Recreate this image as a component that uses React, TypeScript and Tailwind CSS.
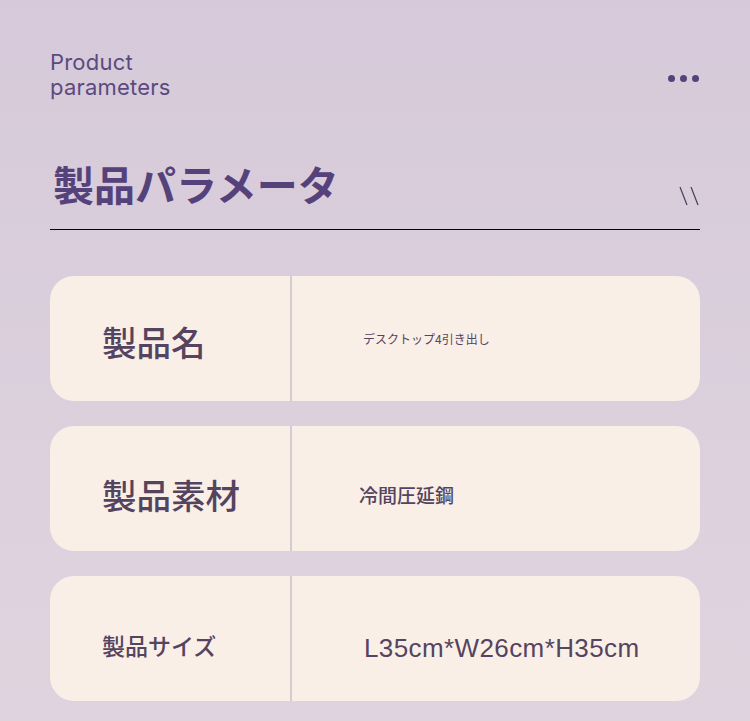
const params = [
  {
    label: '製品名',
    labelClass: 'text-[34.5px] font-medium pt-[5px]',
    value: 'デスクトップ4引き出し',
    valueClass: 'text-[12px] pl-[71px] pt-[1px]',
  },
  {
    label: '製品素材',
    labelClass: 'text-[34.5px] font-medium pt-[12px]',
    value: '冷間圧延鋼',
    valueClass: 'text-[19px] font-medium pl-[67px] pt-[11px]',
  },
  {
    label: '製品サイズ',
    labelClass: 'text-[23px] font-medium pt-[13px]',
    value: 'L35cm*W26cm*H35cm',
    valueClass:
      "text-[26px] tracking-[0.4px] pl-[72px] pt-[19px] font-['Liberation_Sans','Noto_Sans_CJK_JP',sans-serif]",
  },
];

function Dots() {
  return (
    <div className="mt-[25px] flex gap-[5px] pr-[1px]">
      <span className="h-[7px] w-[7px] rounded-full bg-[#54427a]" />
      <span className="h-[7px] w-[7px] rounded-full bg-[#54427a]" />
      <span className="h-[7px] w-[7px] rounded-full bg-[#54427a]" />
    </div>
  );
}

export default function App() {
  return (
    <div className="min-h-[721px] w-[750px] bg-gradient-to-b from-[#d6cada] to-[#dfd4de] px-[50px] pt-[50px] font-['Noto_Sans_CJK_JP',sans-serif]">
      {/* header */}
      <div className="flex items-start justify-between">
        <div className="font-['Inter','Noto_Sans',sans-serif] text-[22px] leading-[25px] tracking-[0.2px] text-[#5b4a7f]">
          <div>Product</div>
          <div>parameters</div>
        </div>
        <Dots />
      </div>

      {/* title */}
      <div className="mt-[59px] flex items-end justify-between border-b border-black pb-[22px]">
        <h1 className="pl-[3px] text-[41px] font-bold leading-[48px] text-[#56427a]">
          製品パラメータ
        </h1>
        <svg width="22" height="20" viewBox="0 0 22 20" className="mb-[1px]">
          <line x1="2" y1="1" x2="9" y2="19" stroke="#4a3d5c" strokeWidth="1.2" />
          <line x1="13" y1="1" x2="20" y2="19" stroke="#4a3d5c" strokeWidth="1.2" />
        </svg>
      </div>

      {/* cards */}
      <div className="mt-[46px] flex flex-col gap-[25px]">
        {params.map((p) => (
          <div
            key={p.label}
            className="flex h-[125px] overflow-hidden rounded-[24px] bg-[#faefe6] text-[#54445f]"
          >
            <div className="flex w-[240px] items-center pl-[52px]">
              <span className={p.labelClass + ' leading-none'}>{p.label}</span>
            </div>
            <div className="w-[2px] bg-[#d6cbd3]" />
            <div className="flex flex-1 items-center">
              <span className={p.valueClass + ' leading-none'}>{p.value}</span>
            </div>
          </div>
        ))}
      </div>
    </div>
  );
}
